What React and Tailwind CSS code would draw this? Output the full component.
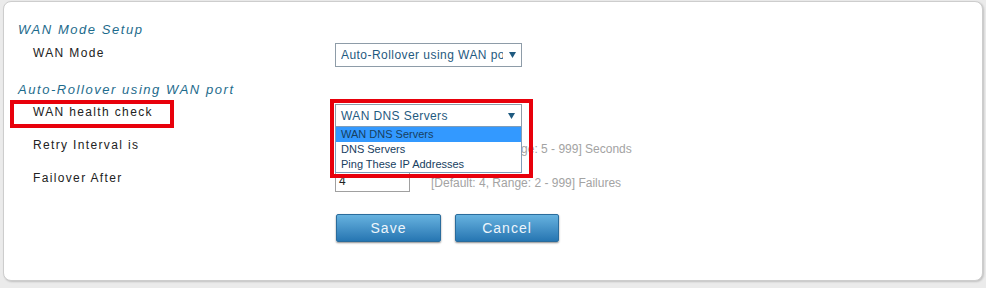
import React from "react";

function Arrow() {
  return (
    <svg width="7" height="6" viewBox="0 0 7 6" className="shrink-0">
      <path d="M0 0 H7 L3.5 6 Z" fill="#1f5a80" />
    </svg>
  );
}

export default function App() {
  const label = "text-[12px] tracking-[1.35px] text-[#222] pl-[15px] w-[317px] shrink-0";
  const heading = "text-[13px] italic tracking-[1.55px] text-[#1d6b8c] h-[16px] leading-[16px]";
  return (
    <div className="w-[986px] h-[288px] bg-[#ebebeb] pt-[1px] pl-[3px] font-['Liberation_Sans',Arial,sans-serif]">
      <div className="relative w-[980px] h-[280px] bg-white border border-[#cdcdcd] rounded-[8px] shadow-[1px_1px_2px_rgba(0,0,0,0.18)] pl-[14px] pt-[20px]">
        <div className={heading}>WAN Mode Setup</div>

        <div className="flex items-start mt-[5px] h-[24px]">
          <div className={label + " leading-[20px]"}>WAN Mode</div>
          <div className="flex items-center justify-between w-[187px] h-[24px] border border-[#8e9ca8] bg-white pl-[5px] pr-[5px] text-[12px] tracking-[0.45px] text-[#1f5a80] overflow-hidden">
            <span className="whitespace-nowrap overflow-hidden w-[162px]">Auto-Rollover using WAN port</span>
            <Arrow />
          </div>
        </div>

        <div className={heading + " mt-[15px]"}>Auto-Rollover using WAN port</div>

        <div className="relative flex items-start mt-[6px] h-[23px]">
          <div className="absolute left-[-8px] top-[-4px] w-[164px] h-[28px] border-[4px] border-[#e8000b] pointer-events-none" />
          <div className={label + " leading-[16px]"}>WAN health check</div>
          <div className="relative w-[187px] h-[23px]">
            <div className="flex items-center justify-between h-full border border-[#8e9ca8] bg-white pl-[5px] pr-[6px] text-[12px] tracking-[0.4px] text-[#1f5a80]">
              <span>WAN DNS Servers</span>
              <Arrow />
            </div>
            <div className="absolute left-0 top-[22px] w-full z-10 border border-[#7f9db9] bg-white text-[11px] text-[#17405f] leading-[15px]">
              <div className="bg-[#3399ff] pl-[5px] h-[15px]">WAN DNS Servers</div>
              <div className="pl-[5px] h-[15px]">DNS Servers</div>
              <div className="pl-[5px] h-[15px]">Ping These IP Addresses</div>
            </div>
            <div className="absolute left-[-5px] top-[-5px] w-[203px] h-[79px] border-[4px] border-[#e8000b] z-20 pointer-events-none" />
          </div>
        </div>

        <div className="flex items-start mt-[12px] h-[20px]">
          <div className={label + " leading-[12px]"}>Retry Interval is</div>
          <div className="w-[75px] h-[20px] border border-[#a0a0a0]" />
          <div className="ml-[21px] text-[12px] leading-[20px] text-[#a3a3a3] whitespace-nowrap">[Default: 30, Range: 5 - 999] Seconds</div>
        </div>

        <div className="flex items-start mt-[13px] h-[20px]">
          <div className={label + " leading-[13px]"}>Failover After</div>
          <div className="w-[75px] h-[20px] border border-[#a0a0a0] text-[12px] leading-[16px] pl-[3px] text-[#222]">4</div>
          <div className="ml-[21px] text-[12px] leading-[22px] text-[#a3a3a3] whitespace-nowrap">[Default: 4, Range: 2 - 999] Failures</div>
        </div>

        <div className="flex items-start mt-[22px] pl-[318px] gap-[14px]">
          <button className="w-[105px] h-[28px] rounded-[2px] border border-[#2a6c9c] bg-gradient-to-b from-[#66b2df] to-[#2676b2] text-[14px] tracking-[1px] text-[#eef5fb] shadow-[0_1px_2px_rgba(0,0,0,0.45)]">Save</button>
          <button className="w-[104px] h-[28px] rounded-[2px] border border-[#2a6c9c] bg-gradient-to-b from-[#66b2df] to-[#2676b2] text-[14px] tracking-[1px] text-[#eef5fb] shadow-[0_1px_2px_rgba(0,0,0,0.45)]">Cancel</button>
        </div>
      </div>
    </div>
  );
}
